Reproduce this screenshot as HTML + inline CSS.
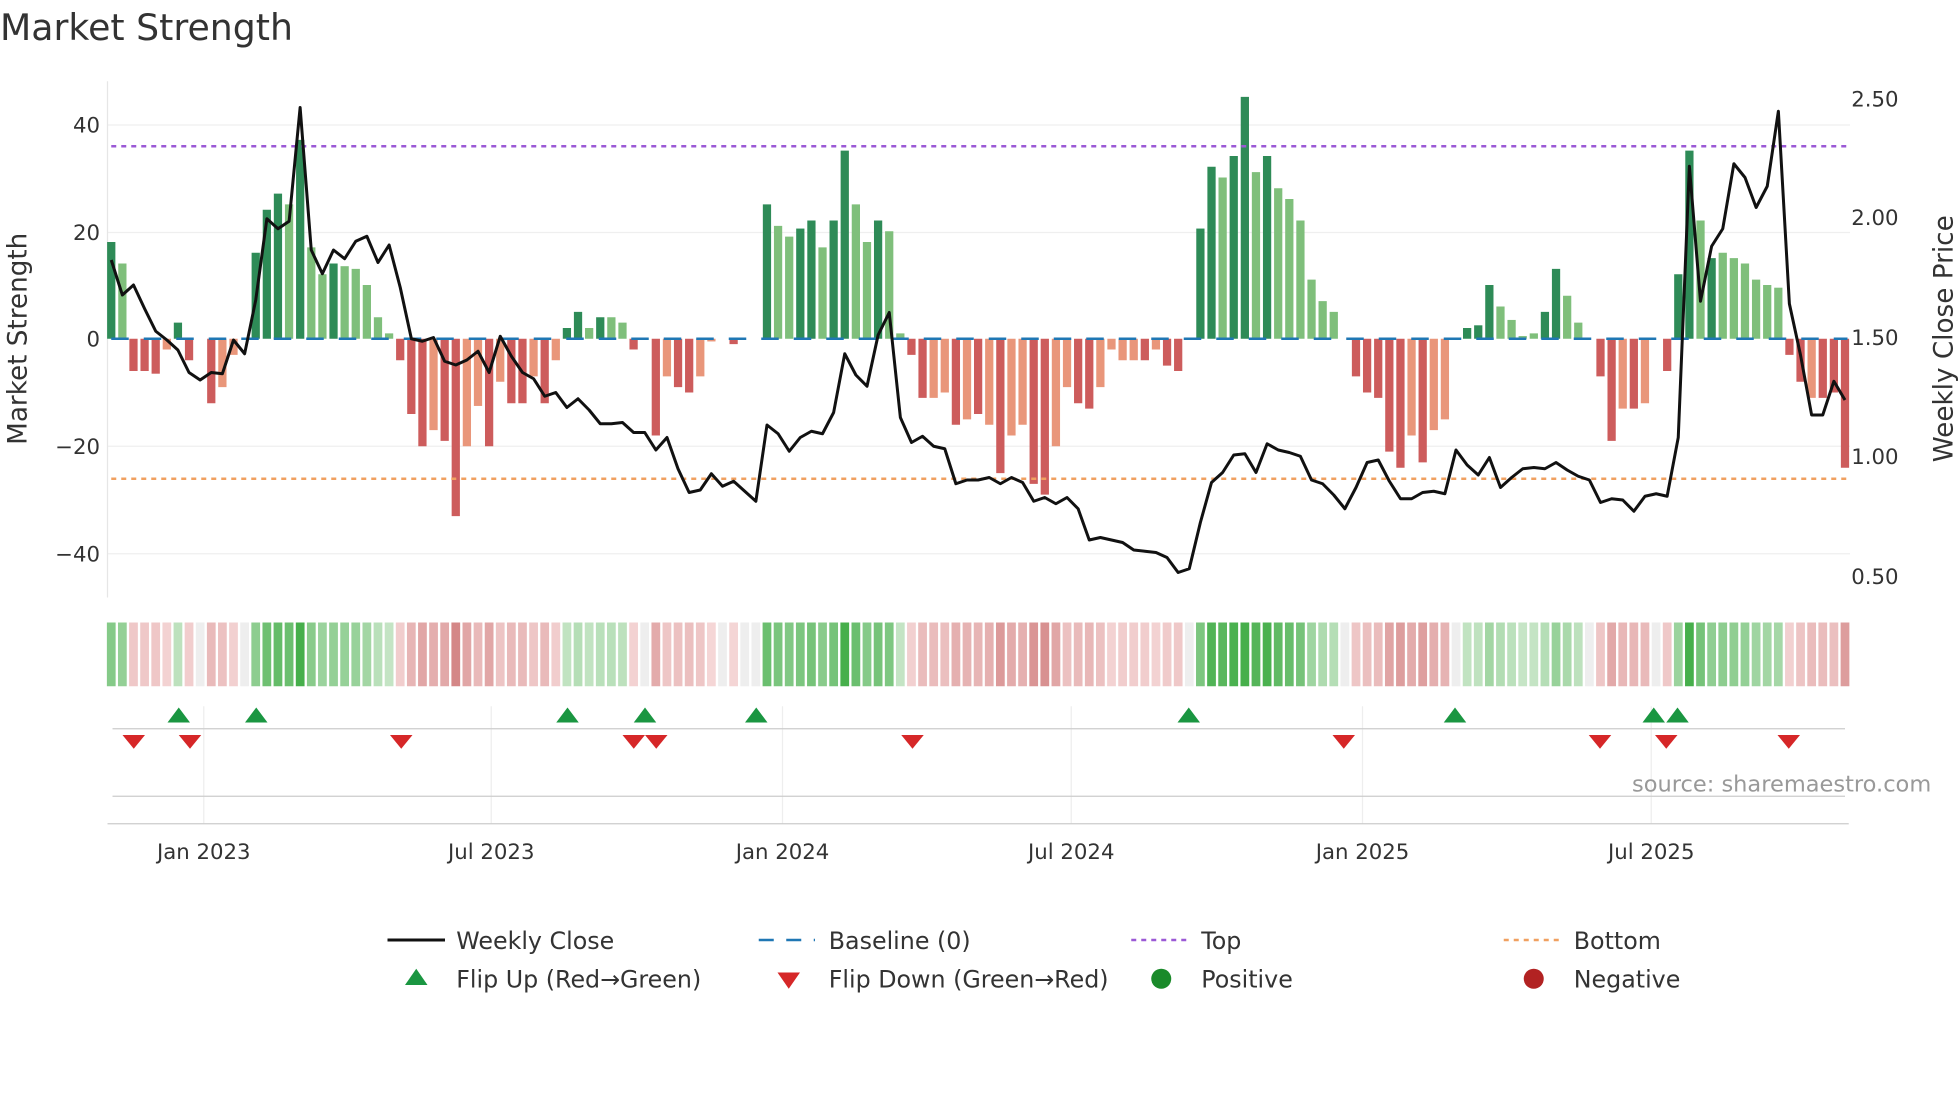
<!DOCTYPE html>
<html><head><meta charset="utf-8"><style>
html,body{margin:0;padding:0;background:#fff;width:1960px;height:1102px;overflow:hidden}
svg{display:block}
text{font-family:"DejaVu Sans","Liberation Sans",sans-serif}
</style></head><body>
<svg id="s" width="1960" height="1102" viewBox="0 0 1568 881.6" xmlns="http://www.w3.org/2000/svg" fill="#333">
<text x="0" y="32" font-size="29" fill="#333">Market Strength</text>
<g stroke="#efefef" stroke-width="1">
<line x1="86" y1="100" x2="1480" y2="100"/><line x1="86" y1="186" x2="1480" y2="186"/>
<line x1="86" y1="357" x2="1480" y2="357"/><line x1="86" y1="443" x2="1480" y2="443"/>
</g>
<line x1="86" y1="65" x2="86" y2="478" stroke="#e6e6e6"/>
<g font-size="17" text-anchor="end" fill="#333">
<text x="80" y="106">40</text><text x="80" y="192">20</text><text x="80" y="277">0</text>
<text x="80" y="363">−20</text><text x="80" y="449">−40</text>
</g>
<g font-size="17" fill="#333">
<text x="1481" y="85">2.50</text><text x="1481" y="180">2.00</text><text x="1481" y="276">1.50</text>
<text x="1481" y="371">1.00</text><text x="1481" y="467">0.50</text>
</g>
<text transform="translate(21,271) rotate(-90)" font-size="21" text-anchor="middle" fill="#333">Market Strength</text>
<text transform="translate(1562,271) rotate(-90)" font-size="21" text-anchor="middle" fill="#333">Weekly Close Price</text>
<g id="bars"></g>
<line x1="89" y1="271" x2="1478" y2="271" stroke="#1f77b4" stroke-width="2" stroke-dasharray="14,12"/>
<line x1="89" y1="117" x2="1478" y2="117" stroke="#9b59d6" stroke-width="2" stroke-dasharray="4,4"/>
<line x1="89" y1="383" x2="1478" y2="383" stroke="#f0a060" stroke-width="2" stroke-dasharray="4,4"/>
<polyline id="pl" fill="none" stroke="#111" stroke-width="2.4" stroke-linejoin="round"/>
<g id="heat"></g>
<g stroke="#eee"><line x1="163" y1="565" x2="163" y2="659"/><line x1="393" y1="565" x2="393" y2="659"/><line x1="626" y1="565" x2="626" y2="659"/><line x1="857" y1="565" x2="857" y2="659"/><line x1="1090" y1="565" x2="1090" y2="659"/><line x1="1321" y1="565" x2="1321" y2="659"/></g>
<line x1="90" y1="583" x2="1476" y2="583" stroke="#ccc"/>
<line x1="90" y1="637" x2="1476" y2="637" stroke="#ccc"/>
<line x1="86" y1="659" x2="1479" y2="659" stroke="#ccc"/>
<g id="mk"></g>
<text x="1545" y="633" font-size="18" style="fill:#999" text-anchor="end">source: sharemaestro.com</text>
<g font-size="17" text-anchor="middle" fill="#333">
<text x="163" y="687">Jan 2023</text><text x="393" y="687">Jul 2023</text><text x="626" y="687">Jan 2024</text>
<text x="857" y="687">Jul 2024</text><text x="1090" y="687">Jan 2025</text><text x="1321" y="687">Jul 2025</text>
</g>
<g font-size="19" fill="#333">
<line x1="310" y1="752" x2="356" y2="752" stroke="#111" stroke-width="2.4"/><text x="365" y="759">Weekly Close</text>
<line x1="607" y1="752" x2="652" y2="752" stroke="#1f77b4" stroke-width="2" stroke-dasharray="12,10"/><text x="663" y="759">Baseline (0)</text>
<line x1="905" y1="752" x2="950" y2="752" stroke="#9b59d6" stroke-width="2" stroke-dasharray="4,4"/><text x="961" y="759">Top</text>
<line x1="1203" y1="752" x2="1248" y2="752" stroke="#f0a060" stroke-width="2" stroke-dasharray="4,4"/><text x="1259" y="759">Bottom</text>
<polygon points="324,788 342,788 333,775" fill="#1a9641"/><text x="365" y="790">Flip Up (Red→Green)</text>
<polygon points="622,778 640,778 631,791" fill="#d62728"/><text x="663" y="790">Flip Down (Green→Red)</text>
<circle cx="929" cy="783" r="8" fill="#1a8a2a"/><text x="961" y="790">Positive</text>
<circle cx="1227" cy="783" r="8" fill="#b22222"/><text x="1259" y="790">Negative</text>
</g>
</svg>
<script>
var v="18d 14l -6r -6r -6.5r -2s 3d -4r 0 -12r -9s -3s 0 16d 24d 27d 25l 37d 17l 12l 14d 13.5l 13l 10l 4l 1l -4r -14r -20r -17s -19r -33r -20s -12.5s -20r -8s -12r -12r -7s -12r -4s 2d 5d 2l 4d 4l 3l -2r 0 -18r -7s -9r -10r -7s -0.5s 0 -1r 0 0 25d 21l 19l 20.5d 22d 17l 22d 35d 25l 18l 22d 20l 1l -3r -11r -11s -10s -16r -15s -14r -16s -25r -18s -16s -27r -29r -20s -9s -12r -13r -9s -2s -4s -4s -4r -2s -5r -6r 0 20.5d 32d 30l 34d 45d 31l 34d 28l 26l 22l 11l 7l 5l 0 -7r -10r -11r -21r -24r -18s -23r -17s -15s 0 2d 2.5d 10d 6l 3.5l 0.5l 1l 5d 13d 8l 3l 0 -7r -19r -13s -13r -12s 0 -6r 12d 35d 22l 15d 16l 15l 14l 11l 10l 9.5l -3r -8r -11s -11r -10r -24r".split(" ");
var C={d:"#2e8b57",l:"#7fbf7b",r:"#cd5c5c",s:"#e9967a"};
var n=v.length,x0=89,x1=1476,st=(x1-x0)/(n-1),b="",h="";
for(var i=0;i<n;i++){var m=v[i].match(/^(-?[\d.]+)(\w?)$/),val=+m[1],c=m[2]||"l",x=x0+i*st;
 if(val!=0){var y=271-val*4.3;b+='<rect x="'+(x-3.3)+'" y="'+Math.min(y,271)+'" width="6.6" height="'+Math.abs(val*4.3)+'" fill="'+C[c]+'"/>';}
 var a=Math.min(1,Math.abs(val)/35),col;
 if(val>0){col="rgb("+Math.round(200-130*a)+","+Math.round(230-55*a)+","+Math.round(200-125*a)+")";}
 else if(val<0){col="rgb("+Math.round(245-35*a)+","+Math.round(215-85*a)+","+Math.round(215-85*a)+")";}
 else col="#eee";
 h+='<rect x="'+(x-3.5)+'" y="498" width="7" height="51" fill="'+col+'"/>';}
document.getElementById("bars").innerHTML=b;document.getElementById("heat").innerHTML=h;
var ys=[208,236,228,247,265,272,280,298,304,298,299,272,283,240,175,183,177,86,200,219,200,207,193,189,210,196,230,271,273,270,289,292,288,281,298,269,285,298,303,317,314,326,319,328,339,339,338,346,346,360,350,375,394,392,379,389,385,393,401,340,347,361,350,345,347,330,283,300,309,268,250,334,354,349,357,359,387,384,384,382,387,382,386,401,398,403,398,407,432,430,432,434,440,441,442,446,458,455,418,386,378,364,363,378,355,360,362,365,384,387,396,407,390,370,368,385,399,399,394,393,395,360,372,380,366,390,382,375,374,375,370,376,381,384,402,399,400,409,397,395,397,350,133,241,197,183,131,142,166,149,89,243,284,332,332,305,320];
var s2=(x1-x0)/(ys.length-1),p="";for(var j=0;j<ys.length;j++)p+=(x0+j*s2).toFixed(1)+","+ys[j]+" ";
document.getElementById("pl").setAttribute("points",p);
var up=[143,205,454,516,605,951,1164,1323,1342],dn=[107,152,321,507,525,730,1075,1280,1333,1431],k="";
up.forEach(function(x){k+='<polygon points="'+(x-9)+',578 '+(x+9)+',578 '+x+',566" fill="#1a9641"/>';});
dn.forEach(function(x){k+='<polygon points="'+(x-9)+',588 '+(x+9)+',588 '+x+',599" fill="#d62728"/>';});
document.getElementById("mk").innerHTML=k;
</script>
</body></html>
